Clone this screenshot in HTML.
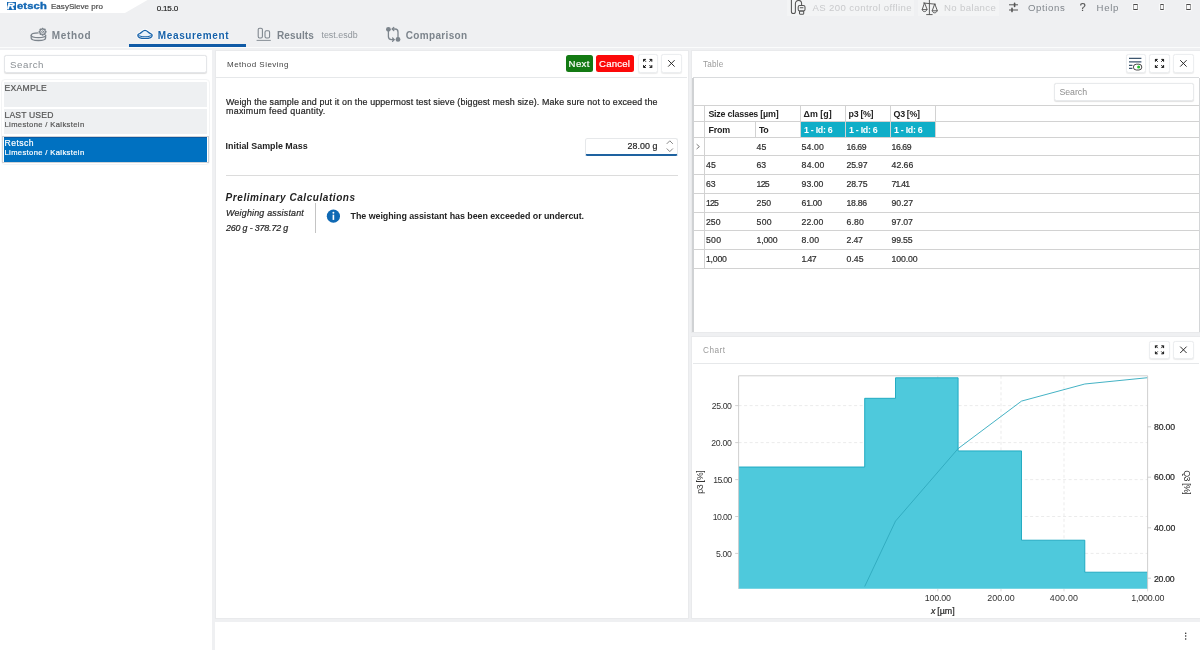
<!DOCTYPE html>
<html lang="en"><head><meta charset="utf-8"><title>EasySieve pro</title>
<style>
html,body{margin:0;padding:0}
body{width:1200px;height:650px;overflow:hidden;background:#eff0f2;position:relative;font-family:"Liberation Sans",sans-serif}
.abs{position:absolute}
.t{position:absolute;white-space:pre;font-family:"Liberation Sans",sans-serif}
.panel{position:absolute;background:#fff;box-sizing:border-box;border:1px solid #e9eaec}
.hl{position:absolute;height:1px;background:#d4d4d4}
.vl{position:absolute;width:1px;background:#d4d4d4}
.btn{position:absolute;box-sizing:border-box;background:#fff;border:1px solid #eceef0;border-radius:2.5px;box-shadow:0 0.5px 1px rgba(0,0,0,.08)}
.li{position:absolute;left:4.2px;width:203px;background:#eef0f2}
</style></head><body>
<!-- title tab -->
<svg class="abs" style="left:0;top:0" width="160" height="14" viewBox="0 0 160 14"><polygon points="0,0 147.5,0 125,13 0,13" fill="#fff"/></svg>
<!-- Retsch logo -->
<div class="abs" style="left:6.6px;top:2px;width:9.7px;height:7.6px;background:#1468b4"></div>
<!-- top right buttons bg -->
<div class="abs" style="left:787px;top:0;width:127px;height:16px;background:#f3f4f5"></div>
<div class="abs" style="left:917.6px;top:0;width:81.4px;height:16px;background:#f3f4f5"></div>
<!-- window glyph boxes -->
<div class="abs" style="left:1133.3px;top:4.1px;width:4.7px;height:5.9px;box-sizing:border-box;border:0.8px solid #a0a0a0;border-top:1.1px solid #484848;border-bottom:1.1px solid #484848;border-radius:0.8px;background:#f7f7f8;box-shadow:0 0 1.2px 1px rgba(255,255,255,.75)"></div>
<div class="abs" style="left:1159.7px;top:4.1px;width:4.7px;height:5.9px;box-sizing:border-box;border:0.8px solid #a0a0a0;border-top:1.1px solid #484848;border-bottom:1.1px solid #484848;border-radius:0.8px;background:#f7f7f8;box-shadow:0 0 1.2px 1px rgba(255,255,255,.75)"></div>
<div class="abs" style="left:1186px;top:4.1px;width:4.7px;height:5.9px;box-sizing:border-box;border:0.8px solid #a0a0a0;border-top:1.1px solid #484848;border-bottom:1.1px solid #484848;border-radius:0.8px;background:#f7f7f8;box-shadow:0 0 1.2px 1px rgba(255,255,255,.75)"></div>
<!-- tab underline + divider -->
<div class="abs" style="left:128.6px;top:44.3px;width:117.8px;height:2.6px;background:#0f5aa6"></div>
<div class="abs" style="left:0;top:46.9px;width:1200px;height:1.3px;background:#fbfcfc"></div>

<!-- left panel -->
<div class="abs" style="left:0;top:49.9px;width:211.8px;height:601px;background:#fff"></div>
<div class="abs" style="left:4.4px;top:55.2px;width:202.6px;height:18.2px;box-sizing:border-box;border:1px solid #e4e6e9;border-radius:2.5px;background:#fff;box-shadow:0 0.8px 1px rgba(0,0,0,.13)"></div>
<div class="abs" style="left:0.6px;top:78.6px;width:209.6px;height:86px;box-sizing:border-box;border:1px solid #f3f4f5;border-radius:4px"></div>
<div class="li" style="top:82px;height:24.5px"></div>
<div class="li" style="top:109.4px;height:24.2px"></div>
<div class="abs" style="left:1.8px;top:135.6px;width:207px;height:27px;box-sizing:border-box;border:1px solid #cfd2d6;background:#fff"></div>
<div class="li" style="top:136.8px;height:24.9px;background:#0071c1;box-sizing:border-box;border-top:1px solid #0a5aa4"></div>

<!-- middle panel -->
<div class="panel" style="left:214.9px;top:49.9px;width:473.7px;height:569.5px"></div>
<div class="abs" style="left:216.4px;top:76.6px;width:470.8px;height:1.2px;background:#e6e8ea"></div>
<div class="abs" style="left:565.6px;top:55px;width:27px;height:17.4px;background:#137a13;border-radius:2.5px"></div>
<div class="abs" style="left:596.2px;top:55px;width:37.8px;height:17.4px;background:#fc0909;border-radius:2.5px"></div>
<div class="btn" style="left:637.6px;top:54.2px;width:20.2px;height:18.4px"></div>
<div class="btn" style="left:661.2px;top:54.2px;width:20.4px;height:18.4px"></div>
<!-- input -->
<div class="abs" style="left:584.6px;top:137.6px;width:93.6px;height:18.6px;box-sizing:border-box;border:1px solid #e6e8ea;border-bottom:2px solid #1e62a0;border-radius:2.5px;background:#fff"></div>
<div class="abs" style="left:226px;top:175px;width:452px;height:1.3px;background:#dcdcdc"></div>
<div class="abs" style="left:315px;top:203px;width:1px;height:30px;background:#c4c4c4"></div>

<!-- table panel -->
<div class="panel" style="left:691.2px;top:49.9px;width:510px;height:283px"></div>
<div class="abs" style="left:692.6px;top:76.6px;width:506.4px;height:1.2px;background:#d9dbdd"></div>
<div class="btn" style="left:1125.6px;top:54.2px;width:20.2px;height:18.4px"></div>
<div class="btn" style="left:1149.4px;top:54.2px;width:20.2px;height:18.4px"></div>
<div class="btn" style="left:1173.2px;top:54.2px;width:20.4px;height:18.4px"></div>
<!-- grid -->
<div class="abs" style="left:692.2px;top:77.6px;width:1.4px;height:254.6px;background:#d0d2d4"></div>
<div class="abs" style="left:1054.2px;top:82.8px;width:140.2px;height:17.8px;box-sizing:border-box;border:1px solid #e8eaec;border-radius:2.5px;background:#fff;box-shadow:0 0.8px 1px rgba(0,0,0,.12)"></div>
<div class="abs" style="left:693.6px;top:105.2px;width:505.4px;height:1px;background:#d2d2d2"></div>
<div class="abs" style="left:693.6px;top:121.0px;width:505.4px;height:1px;background:#d2d2d2"></div>
<div class="abs" style="left:693.6px;top:136.6px;width:505.4px;height:1px;background:#d2d2d2"></div>
<div class="abs" style="left:693.6px;top:155.27px;width:505.4px;height:1px;background:#d2d2d2"></div>
<div class="abs" style="left:693.6px;top:174.04px;width:505.4px;height:1px;background:#d2d2d2"></div>
<div class="abs" style="left:693.6px;top:192.81px;width:505.4px;height:1px;background:#d2d2d2"></div>
<div class="abs" style="left:693.6px;top:211.58px;width:505.4px;height:1px;background:#d2d2d2"></div>
<div class="abs" style="left:693.6px;top:230.35px;width:505.4px;height:1px;background:#d2d2d2"></div>
<div class="abs" style="left:693.6px;top:249.12px;width:505.4px;height:1px;background:#d2d2d2"></div>
<div class="abs" style="left:693.6px;top:267.89px;width:505.4px;height:1px;background:#d2d2d2"></div>
<div class="abs" style="left:703.8px;top:105.2px;width:1px;height:163.4px;background:#d2d2d2"></div>
<div class="abs" style="left:1198.9px;top:77.6px;width:1px;height:254.6px;background:#d4d6d8"></div>
<div class="abs" style="left:755.0px;top:121.5px;width:1px;height:15.4px;background:#d2d2d2"></div>
<div class="abs" style="left:800.0px;top:105.6px;width:1px;height:31.2px;background:#d2d2d2"></div>
<div class="abs" style="left:845.0px;top:105.6px;width:1px;height:31.2px;background:#d2d2d2"></div>
<div class="abs" style="left:890.0px;top:105.6px;width:1px;height:31.2px;background:#d2d2d2"></div>
<div class="abs" style="left:935.2px;top:105.6px;width:1px;height:31.2px;background:#d2d2d2"></div>
<div class="abs" style="left:800.9px;top:121.9px;width:44.1px;height:14.8px;background:#10aec8"></div>
<div class="abs" style="left:845.9px;top:121.9px;width:44.1px;height:14.8px;background:#10aec8"></div>
<div class="abs" style="left:890.9px;top:121.9px;width:44.3px;height:14.8px;background:#10aec8"></div>

<!-- chart panel -->
<div class="panel" style="left:691.2px;top:336px;width:510px;height:283.4px"></div>
<div class="abs" style="left:692.6px;top:362.6px;width:506.4px;height:1.2px;background:#e6e8ea"></div>
<div class="btn" style="left:1149.4px;top:340.6px;width:20.2px;height:18.4px"></div>
<div class="btn" style="left:1173.2px;top:340.6px;width:20.4px;height:18.4px"></div>
<svg class="abs" style="left:0;top:0" width="1200" height="650" viewBox="0 0 1200 650">
<rect x="738.6" y="375.8" width="408.9999999999999" height="212.99999999999994" fill="#fff"/>
<line x1="738.6" y1="405.6" x2="1147.6" y2="405.6" stroke="#e6e6e6" stroke-width="0.8" stroke-dasharray="3 2.5"/><line x1="735.2" y1="405.6" x2="738.6" y2="405.6" stroke="#bdbdbd" stroke-width="0.7"/><line x1="738.6" y1="442.6" x2="1147.6" y2="442.6" stroke="#e6e6e6" stroke-width="0.8" stroke-dasharray="3 2.5"/><line x1="735.2" y1="442.6" x2="738.6" y2="442.6" stroke="#bdbdbd" stroke-width="0.7"/><line x1="738.6" y1="479.6" x2="1147.6" y2="479.6" stroke="#e6e6e6" stroke-width="0.8" stroke-dasharray="3 2.5"/><line x1="735.2" y1="479.6" x2="738.6" y2="479.6" stroke="#bdbdbd" stroke-width="0.7"/><line x1="738.6" y1="516.5" x2="1147.6" y2="516.5" stroke="#e6e6e6" stroke-width="0.8" stroke-dasharray="3 2.5"/><line x1="735.2" y1="516.5" x2="738.6" y2="516.5" stroke="#bdbdbd" stroke-width="0.7"/><line x1="738.6" y1="553.4" x2="1147.6" y2="553.4" stroke="#e6e6e6" stroke-width="0.8" stroke-dasharray="3 2.5"/><line x1="735.2" y1="553.4" x2="738.6" y2="553.4" stroke="#bdbdbd" stroke-width="0.7"/><line x1="937.8" y1="375.8" x2="937.8" y2="588.8" stroke="#e6e6e6" stroke-width="0.8" stroke-dasharray="3 2.5"/><line x1="937.8" y1="588.8" x2="937.8" y2="591.4" stroke="#cfcfcf" stroke-width="0.7"/><line x1="1001" y1="375.8" x2="1001" y2="588.8" stroke="#e6e6e6" stroke-width="0.8" stroke-dasharray="3 2.5"/><line x1="1001" y1="588.8" x2="1001" y2="591.4" stroke="#cfcfcf" stroke-width="0.7"/><line x1="1064" y1="375.8" x2="1064" y2="588.8" stroke="#e6e6e6" stroke-width="0.8" stroke-dasharray="3 2.5"/><line x1="1064" y1="588.8" x2="1064" y2="591.4" stroke="#cfcfcf" stroke-width="0.7"/><line x1="1147.6" y1="588.8" x2="1147.6" y2="591.4" stroke="#cfcfcf" stroke-width="0.7"/><line x1="1147.6" y1="426.8" x2="1151.0" y2="426.8" stroke="#bdbdbd" stroke-width="0.7"/><line x1="1147.6" y1="477.2" x2="1151.0" y2="477.2" stroke="#bdbdbd" stroke-width="0.7"/><line x1="1147.6" y1="527.8" x2="1151.0" y2="527.8" stroke="#bdbdbd" stroke-width="0.7"/><line x1="1147.6" y1="578.2" x2="1151.0" y2="578.2" stroke="#bdbdbd" stroke-width="0.7"/>
<polygon points="738.6,588.8 738.6,467.0 864.7,467.0 864.7,398.3 895.5,398.3 895.5,377.8 958.1,377.8 958.1,450.9 1021.5,450.9 1021.5,540.2 1084.8,540.2 1084.8,572.2 1147.6,572.2 1147.6,588.8" fill="#4ec9dc"/>
<polyline points="738.6,467.0 864.7,467.0 864.7,398.3 895.5,398.3 895.5,377.8 958.1,377.8 958.1,450.9 1021.5,450.9 1021.5,540.2 1084.8,540.2 1084.8,572.2 1147.6,572.2" fill="none" stroke="#16a5bd" stroke-width="0.9"/>
<polyline points="864.7,586.5 895.5,521.1 958.1,448.6 1021.5,401.1 1084.8,384.0 1147.6,377.7" fill="none" stroke="#2fa9bd" stroke-width="0.9"/>
<path d="M738.6 588.8V375.8H1147.6V588.8" fill="none" stroke="#c9c9c9" stroke-width="0.9"/>
</svg>

<!-- bottom bar -->
<div class="abs" style="left:215.4px;top:622px;width:984.6px;height:28px;background:#fff"></div>

<!-- icons -->
<svg class="abs" style="left:0;top:0" width="1200" height="650" viewBox="0 0 1200 650"><g fill="none" stroke="#7c848c" stroke-width="1.3" stroke-linecap="round" stroke-linejoin="round">
<ellipse cx="38.4" cy="35.3" rx="7.2" ry="2.4"/>
<path d="M31.2 35.3V38C31.2 39.5 34.4 40.5 38.4 40.5S45.6 39.5 45.6 38V35.3"/>
<circle cx="42.6" cy="31.7" r="4.3" fill="#eff0f2" stroke="none"/>
<path d="M45.24 31.15L45.98 31.33L45.98 32.07L45.24 32.25L44.86 33.18L45.25 33.83L44.73 34.35L44.08 33.96L43.15 34.34L42.97 35.08L42.23 35.08L42.05 34.34L41.12 33.96L40.47 34.35L39.95 33.83L40.34 33.18L39.96 32.25L39.22 32.07L39.22 31.33L39.96 31.15L40.34 30.22L39.95 29.57L40.47 29.05L41.12 29.44L42.05 29.06L42.23 28.32L42.97 28.32L43.15 29.06L44.08 29.44L44.73 29.05L45.25 29.57L44.86 30.22Z" stroke-width="1.25"/>
<circle cx="42.6" cy="31.7" r="1.0" stroke-width="0.9"/>
</g>
<path d="M137.8 35.2C137.8 34 139 33.9 139.9 33.4C141.9 32.3 143 30.3 145 30.3S148.1 32.3 150.1 33.4C151 33.9 152.2 34 152.2 35.2C152.2 37.2 149 38.5 145 38.5S137.8 37.2 137.8 35.2Z" fill="none" stroke="#fff" stroke-width="3" stroke-linejoin="round" opacity="0.9"/>
<g fill="none" stroke="#1560a8" stroke-width="1.2" stroke-linecap="round" stroke-linejoin="round">
<path d="M137.8 35.2C137.8 34 139 33.9 139.9 33.4C141.9 32.3 143 30.3 145 30.3S148.1 32.3 150.1 33.4C151 33.9 152.2 34 152.2 35.2C152.2 37.2 149 38.5 145 38.5S137.8 37.2 137.8 35.2Z" fill="#eaf2fa"/>
<path d="M138.4 35.1C139.6 36.3 142 36.8 145 36.8S150.4 36.3 151.6 35.1" stroke-width="1.0"/>
</g>
<g fill="none" stroke="#7c848c" stroke-width="1.05">
<rect x="258.2" y="28.2" width="4.2" height="9.8" rx="1.4"/>
<rect x="265" y="30.8" width="4.6" height="7.2" rx="1.4"/>
<path d="M256.6 40.4H270.8" stroke-width="0.9"/>
</g>
<g fill="none" stroke="#7c848c" stroke-width="1.3" stroke-linecap="round" stroke-linejoin="round">
<circle cx="388.4" cy="29.3" r="2.4" fill="#7c848c" stroke="none"/>
<circle cx="398" cy="39.4" r="2.4" fill="#7c848c" stroke="none"/>
<path d="M388.4 31V36.6C388.4 38.6 389.6 39.6 391.4 39.6H394"/>
<path d="M392.6 38L394.2 39.6L392.6 41.2"/>
<path d="M398 37.6V32C398 30 396.8 29 395 29H392.4"/>
<path d="M393.8 27.4L392.2 29L393.8 30.6"/>
</g>
<g fill="none" stroke="#555" stroke-width="1.05" stroke-linecap="round" stroke-linejoin="round">
<path d="M791.4 0V11.4C791.4 12.7 792.2 13.5 793.4 13.5S795.4 12.7 795.4 11.4V3.6C795.4 1.6 796.8 0.5 798.6 0.5S801.6 1.8 801.6 3.6V5.4"/>
<rect x="798.2" y="5.4" width="6.8" height="5.6" rx="1.6"/>
<rect x="799.5" y="11" width="4.2" height="3.2" rx="0.6"/>
<path d="M800.2 7.8H803"/>
</g>
<g fill="none" stroke="#555" stroke-width="0.95" stroke-linecap="round" stroke-linejoin="round">
<path d="M929.4 0V14.4M926.6 14.6H932.2M923.6 3L935.4 4.2"/>
<path d="M924.4 3.2L922.2 9.6H926.8Z"/><path d="M922.2 9.6C922.4 11 923.4 11.6 924.5 11.6S926.6 11 926.8 9.6"/>
<path d="M934.6 4.2L932.2 10.8H937Z"/><path d="M932.2 10.8C932.4 12.2 933.4 12.8 934.6 12.8S936.8 12.2 937 10.8"/>
</g>
<g fill="none" stroke="#555" stroke-width="1.0" stroke-linecap="round">
<path d="M1009.4 4.8H1017.6M1009.4 10H1017.6"/>
<path d="M1014.6 3.2V6.4M1012 8.4V11.6" stroke-width="1.6"/>
</g>
<path d="M645.90 61.70L643.60 59.40M645.90 59.40H643.60V61.70" fill="none" stroke="#111" stroke-width="1.0"/><path d="M649.50 61.70L651.80 59.40M649.50 59.40H651.80V61.70" fill="none" stroke="#111" stroke-width="1.0"/><path d="M645.90 65.10L643.60 67.40M645.90 67.40H643.60V65.10" fill="none" stroke="#111" stroke-width="1.0"/><path d="M649.50 65.10L651.80 67.40M649.50 67.40H651.80V65.10" fill="none" stroke="#111" stroke-width="1.0"/>
<path d="M668.20 60.20L674.60 66.60M674.60 60.20L668.20 66.60" stroke="#222" stroke-width="0.95" fill="none"/>
<path d="M1157.70 61.70L1155.40 59.40M1157.70 59.40H1155.40V61.70" fill="none" stroke="#111" stroke-width="1.0"/><path d="M1161.30 61.70L1163.60 59.40M1161.30 59.40H1163.60V61.70" fill="none" stroke="#111" stroke-width="1.0"/><path d="M1157.70 65.10L1155.40 67.40M1157.70 67.40H1155.40V65.10" fill="none" stroke="#111" stroke-width="1.0"/><path d="M1161.30 65.10L1163.60 67.40M1161.30 67.40H1163.60V65.10" fill="none" stroke="#111" stroke-width="1.0"/>
<path d="M1180.20 60.20L1186.60 66.60M1186.60 60.20L1180.20 66.60" stroke="#222" stroke-width="0.95" fill="none"/>
<path d="M1157.70 348.10L1155.40 345.80M1157.70 345.80H1155.40V348.10" fill="none" stroke="#111" stroke-width="1.0"/><path d="M1161.30 348.10L1163.60 345.80M1161.30 345.80H1163.60V348.10" fill="none" stroke="#111" stroke-width="1.0"/><path d="M1157.70 351.50L1155.40 353.80M1157.70 353.80H1155.40V351.50" fill="none" stroke="#111" stroke-width="1.0"/><path d="M1161.30 351.50L1163.60 353.80M1161.30 353.80H1163.60V351.50" fill="none" stroke="#111" stroke-width="1.0"/>
<path d="M1180.20 346.60L1186.60 353.00M1186.60 346.60L1180.20 353.00" stroke="#222" stroke-width="0.95" fill="none"/>
<g fill="none" stroke="#3d566e" stroke-width="1.3">
<path d="M1129 58.3H1141.4M1129 61.9H1141.4M1129 65.3H1132.4M1129 68.4H1132.4"/>
<rect x="1133.4" y="64.2" width="8.4" height="5.8" rx="2.9" fill="#fff" stroke="#333" stroke-width="0.9"/>
<circle cx="1138.6" cy="67.1" r="1.5" fill="#22c02a" stroke="none"/>
</g>
<g fill="none" stroke="#666" stroke-width="0.8" stroke-linecap="round" stroke-linejoin="round">
<path d="M667 143.6L669.8 140.8L672.6 143.6"/><path d="M667 148.8L669.8 151.6L672.6 148.8"/></g>
<circle cx="333.4" cy="216.2" r="6.6" fill="#0f69b4"/>
<circle cx="333.4" cy="212.8" r="0.95" fill="#fff"/><rect x="332.6" y="214.7" width="1.6" height="5.2" fill="#fff"/>
<path d="M696.6 144.2L699.4 146.6L696.6 149" fill="none" stroke="#444" stroke-width="0.7"/>
<circle cx="1185.7" cy="633.2" r="0.75" fill="#222"/><circle cx="1185.7" cy="636.1" r="0.75" fill="#222"/><circle cx="1185.7" cy="639" r="0.75" fill="#222"/></svg>

<!-- text -->
<div class="abs" style="left:0;top:0;width:1200px;height:650px;will-change:transform">
<span class="t" style="left:7.4px;top:0.8px;font-size:8.2px;line-height:11px;font-weight:700;font-style:italic;color:#fff;-webkit-text-stroke:0.3px #fff;transform:scaleX(1.3);transform-origin:0 0">R</span>
<span class="t" style="left:16.7px;top:0.6px;font-size:8.6px;line-height:11px;font-weight:700;color:#1468b4;-webkit-text-stroke:0.35px #1468b4;letter-spacing:0.1px;transform:scaleX(1.3);transform-origin:0 0">etsch</span>
<span class="t" style="font-size:8px;line-height:11.2px;color:#4a4a4a;letter-spacing:0.031px;-webkit-text-stroke:0.2px currentColor;left:51.00px;top:1.00px;">EasySieve pro</span>
<span class="t" style="font-size:8.1px;line-height:11.34px;color:#262626;letter-spacing:-0.203px;-webkit-text-stroke:0.2px currentColor;left:156.70px;top:3.00px;">0.15.0</span>
<span class="t" style="font-size:9.6px;line-height:13.44px;color:#c9cacc;letter-spacing:0.389px;left:812.40px;top:1.00px;">AS 200 control offline</span>
<span class="t" style="font-size:9.6px;line-height:13.44px;color:#c9cacc;letter-spacing:0.365px;left:944.00px;top:1.00px;">No balance</span>
<span class="t" style="font-size:9.6px;line-height:13.44px;color:#80868c;letter-spacing:0.617px;left:1028.00px;top:1.00px;">Options</span>
<span class="t" style="font-size:10.6px;line-height:14.84px;color:#555;letter-spacing:-0.106px;-webkit-text-stroke:0.2px currentColor;left:1079.80px;top:0.00px;">?</span>
<span class="t" style="font-size:9.6px;line-height:13.44px;color:#80868c;letter-spacing:0.666px;left:1096.60px;top:1.00px;">Help</span>
<span class="t" style="font-size:10px;line-height:14.0px;color:#7c848c;letter-spacing:0.676px;font-weight:700;left:51.70px;top:29.00px;">Method</span>
<span class="t" style="font-size:10px;line-height:14.0px;color:#1560a8;letter-spacing:0.630px;font-weight:700;text-shadow:0 0 1px #fff,0 0 1.6px #fff,0 0 1.6px #fff;left:157.80px;top:29.00px;">Measurement</span>
<span class="t" style="font-size:10px;line-height:14.0px;color:#7c848c;letter-spacing:0.139px;font-weight:700;left:276.90px;top:29.00px;">Results</span>
<span class="t" style="font-size:8.9px;line-height:12.46px;color:#8f959b;letter-spacing:0.041px;left:321.40px;top:29.00px;">test.esdb</span>
<span class="t" style="font-size:10px;line-height:14.0px;color:#7c848c;letter-spacing:0.346px;font-weight:700;left:405.70px;top:29.00px;">Comparison</span>
<span class="t" style="font-size:9.7px;line-height:13.58px;color:#8a8f94;letter-spacing:0.549px;left:10.00px;top:58.00px;">Search</span>
<span class="t" style="font-size:8.6px;line-height:12.04px;color:#555;letter-spacing:0.284px;-webkit-text-stroke:0.2px currentColor;left:4.50px;top:82.00px;">EXAMPLE</span>
<span class="t" style="font-size:8.6px;line-height:12.04px;color:#555;letter-spacing:0.155px;-webkit-text-stroke:0.2px currentColor;left:4.50px;top:109.00px;">LAST USED</span>
<span class="t" style="font-size:7.6px;line-height:10.64px;color:#555;letter-spacing:0.372px;-webkit-text-stroke:0.2px currentColor;left:4.50px;top:120.00px;">Limestone / Kalkstein</span>
<span class="t" style="font-size:8.6px;line-height:12.04px;color:#fff;letter-spacing:0.458px;-webkit-text-stroke:0.2px currentColor;left:4.50px;top:137.00px;">Retsch</span>
<span class="t" style="font-size:7.6px;line-height:10.64px;color:#fff;letter-spacing:0.372px;-webkit-text-stroke:0.2px currentColor;left:4.50px;top:148.00px;">Limestone / Kalkstein</span>
<span class="t" style="font-size:8px;line-height:11.2px;color:#444;letter-spacing:0.489px;left:227.00px;top:59.00px;">Method Sieving</span>
<span class="t" style="font-size:9.6px;line-height:13.44px;color:#fff;letter-spacing:0.366px;-webkit-text-stroke:0.2px currentColor;left:568.60px;top:57.00px;">Next</span>
<span class="t" style="font-size:9.6px;line-height:13.44px;color:#fff;letter-spacing:0.221px;-webkit-text-stroke:0.2px currentColor;left:599.00px;top:57.00px;">Cancel</span>
<span class="t" style="font-size:8.9px;line-height:12.46px;color:#262626;letter-spacing:0.134px;-webkit-text-stroke:0.2px currentColor;left:226.00px;top:96.00px;">Weigh the sample and put it on the uppermost test sieve (biggest mesh size). Make sure not to exceed the</span>
<span class="t" style="font-size:8.9px;line-height:12.46px;color:#262626;letter-spacing:0.274px;-webkit-text-stroke:0.2px currentColor;left:226.00px;top:105.00px;">maximum feed quantity.</span>
<span class="t" style="font-size:8.9px;line-height:12.46px;color:#222;letter-spacing:0.006px;font-weight:700;left:225.60px;top:140.00px;">Initial Sample Mass</span>
<span class="t" style="font-size:8.9px;line-height:12.46px;color:#262626;letter-spacing:0.054px;-webkit-text-stroke:0.2px currentColor;left:627.60px;top:140.00px;">28.00 g</span>
<span class="t" style="font-size:10px;line-height:14.0px;color:#222;letter-spacing:0.553px;font-weight:700;font-style:italic;left:225.60px;top:191.00px;">Preliminary Calculations</span>
<span class="t" style="font-size:8.9px;line-height:12.46px;color:#262626;letter-spacing:0.204px;-webkit-text-stroke:0.2px currentColor;font-style:italic;left:226.00px;top:207.00px;">Weighing assistant</span>
<span class="t" style="font-size:8.9px;line-height:12.46px;color:#262626;letter-spacing:-0.166px;-webkit-text-stroke:0.2px currentColor;font-style:italic;left:226.00px;top:222.00px;">260 g - 378.72 g</span>
<span class="t" style="font-size:8.9px;line-height:12.46px;color:#222;letter-spacing:-0.044px;font-weight:700;left:350.60px;top:210.00px;">The weighing assistant has been exceeded or undercut.</span>
<span class="t" style="font-size:8.2px;line-height:11.48px;color:#9a9a9a;letter-spacing:0.184px;left:703.00px;top:59.00px;">Table</span>
<span class="t" style="font-size:8.8px;line-height:12.32px;color:#8e8e8e;letter-spacing:-0.046px;left:1059.40px;top:86.00px;">Search</span>
<span class="t" style="font-size:8.9px;line-height:12.46px;color:#222;letter-spacing:-0.217px;font-weight:700;left:708.40px;top:108.00px;">Size classes [µm]</span>
<span class="t" style="font-size:8.9px;line-height:12.46px;color:#222;letter-spacing:-0.013px;font-weight:700;left:803.60px;top:108.00px;">Δm [g]</span>
<span class="t" style="font-size:8.9px;line-height:12.46px;color:#222;letter-spacing:-0.337px;font-weight:700;left:848.60px;top:108.00px;">p3 [%]</span>
<span class="t" style="font-size:8.9px;line-height:12.46px;color:#222;letter-spacing:-0.352px;font-weight:700;left:893.60px;top:108.00px;">Q3 [%]</span>
<span class="t" style="font-size:8.9px;line-height:12.46px;color:#222;letter-spacing:-0.197px;font-weight:700;left:708.60px;top:124.00px;">From</span>
<span class="t" style="font-size:8.9px;line-height:12.46px;color:#222;letter-spacing:-0.394px;font-weight:700;left:759.00px;top:124.00px;">To</span>
<span class="t" style="font-size:8.9px;line-height:12.46px;color:#fff;letter-spacing:-0.298px;font-weight:700;left:804.00px;top:124.00px;">1 - Id: 6</span>
<span class="t" style="font-size:8.9px;line-height:12.46px;color:#fff;letter-spacing:-0.298px;font-weight:700;left:849.00px;top:124.00px;">1 - Id: 6</span>
<span class="t" style="font-size:8.9px;line-height:12.46px;color:#fff;letter-spacing:-0.298px;font-weight:700;left:894.00px;top:124.00px;">1 - Id: 6</span>
<span class="t" style="font-size:8.7px;line-height:12.18px;color:#2e2e2e;letter-spacing:0.141px;-webkit-text-stroke:0.2px currentColor;left:756.60px;top:141.00px;">45</span>
<span class="t" style="font-size:8.7px;line-height:12.18px;color:#2e2e2e;letter-spacing:0.150px;-webkit-text-stroke:0.2px currentColor;left:801.60px;top:141.00px;">54.00</span>
<span class="t" style="font-size:8.7px;line-height:12.18px;color:#2e2e2e;letter-spacing:-0.434px;-webkit-text-stroke:0.2px currentColor;left:846.60px;top:141.00px;">16.69</span>
<span class="t" style="font-size:8.7px;line-height:12.18px;color:#2e2e2e;letter-spacing:-0.434px;-webkit-text-stroke:0.2px currentColor;left:891.60px;top:141.00px;">16.69</span>
<span class="t" style="font-size:8.7px;line-height:12.18px;color:#2e2e2e;letter-spacing:0.141px;-webkit-text-stroke:0.2px currentColor;left:706.00px;top:159.00px;">45</span>
<span class="t" style="font-size:8.7px;line-height:12.18px;color:#2e2e2e;letter-spacing:-0.078px;-webkit-text-stroke:0.2px currentColor;left:756.60px;top:159.00px;">63</span>
<span class="t" style="font-size:8.7px;line-height:12.18px;color:#2e2e2e;letter-spacing:0.263px;-webkit-text-stroke:0.2px currentColor;left:801.60px;top:159.00px;">84.00</span>
<span class="t" style="font-size:8.7px;line-height:12.18px;color:#2e2e2e;letter-spacing:-0.216px;-webkit-text-stroke:0.2px currentColor;left:846.60px;top:159.00px;">25.97</span>
<span class="t" style="font-size:8.7px;line-height:12.18px;color:#2e2e2e;letter-spacing:-0.025px;-webkit-text-stroke:0.2px currentColor;left:891.60px;top:159.00px;">42.66</span>
<span class="t" style="font-size:8.7px;line-height:12.18px;color:#2e2e2e;letter-spacing:-0.078px;-webkit-text-stroke:0.2px currentColor;left:706.00px;top:178.00px;">63</span>
<span class="t" style="font-size:8.7px;line-height:12.18px;color:#2e2e2e;letter-spacing:-0.781px;-webkit-text-stroke:0.2px currentColor;left:756.60px;top:178.00px;">125</span>
<span class="t" style="font-size:8.7px;line-height:12.18px;color:#2e2e2e;letter-spacing:0.016px;-webkit-text-stroke:0.2px currentColor;left:801.60px;top:178.00px;">93.00</span>
<span class="t" style="font-size:8.7px;line-height:12.18px;color:#2e2e2e;letter-spacing:-0.197px;-webkit-text-stroke:0.2px currentColor;left:846.60px;top:178.00px;">28.75</span>
<span class="t" style="font-size:8.7px;line-height:12.18px;color:#2e2e2e;letter-spacing:-0.812px;-webkit-text-stroke:0.2px currentColor;left:891.60px;top:178.00px;">71.41</span>
<span class="t" style="font-size:8.7px;line-height:12.18px;color:#2e2e2e;letter-spacing:-0.781px;-webkit-text-stroke:0.2px currentColor;left:706.00px;top:197.00px;">125</span>
<span class="t" style="font-size:8.7px;line-height:12.18px;color:#2e2e2e;letter-spacing:0.010px;-webkit-text-stroke:0.2px currentColor;left:756.60px;top:197.00px;">250</span>
<span class="t" style="font-size:8.7px;line-height:12.18px;color:#2e2e2e;letter-spacing:-0.291px;-webkit-text-stroke:0.2px currentColor;left:801.60px;top:197.00px;">61.00</span>
<span class="t" style="font-size:8.7px;line-height:12.18px;color:#2e2e2e;letter-spacing:-0.312px;-webkit-text-stroke:0.2px currentColor;left:846.60px;top:197.00px;">18.86</span>
<span class="t" style="font-size:8.7px;line-height:12.18px;color:#2e2e2e;letter-spacing:-0.059px;-webkit-text-stroke:0.2px currentColor;left:891.60px;top:197.00px;">90.27</span>
<span class="t" style="font-size:8.7px;line-height:12.18px;color:#2e2e2e;letter-spacing:0.010px;-webkit-text-stroke:0.2px currentColor;left:706.00px;top:216.00px;">250</span>
<span class="t" style="font-size:8.7px;line-height:12.18px;color:#2e2e2e;letter-spacing:0.255px;-webkit-text-stroke:0.2px currentColor;left:756.60px;top:216.00px;">500</span>
<span class="t" style="font-size:8.7px;line-height:12.18px;color:#2e2e2e;letter-spacing:-0.016px;-webkit-text-stroke:0.2px currentColor;left:801.60px;top:216.00px;">22.00</span>
<span class="t" style="font-size:8.7px;line-height:12.18px;color:#2e2e2e;letter-spacing:0.121px;-webkit-text-stroke:0.2px currentColor;left:846.60px;top:216.00px;">6.80</span>
<span class="t" style="font-size:8.7px;line-height:12.18px;color:#2e2e2e;letter-spacing:-0.141px;-webkit-text-stroke:0.2px currentColor;left:891.60px;top:216.00px;">97.07</span>
<span class="t" style="font-size:8.7px;line-height:12.18px;color:#2e2e2e;letter-spacing:0.255px;-webkit-text-stroke:0.2px currentColor;left:706.00px;top:234.00px;">500</span>
<span class="t" style="font-size:8.7px;line-height:12.18px;color:#2e2e2e;letter-spacing:-0.209px;-webkit-text-stroke:0.2px currentColor;left:756.60px;top:234.00px;">1,000</span>
<span class="t" style="font-size:8.7px;line-height:12.18px;color:#2e2e2e;letter-spacing:0.180px;-webkit-text-stroke:0.2px currentColor;left:801.60px;top:234.00px;">8.00</span>
<span class="t" style="font-size:8.7px;line-height:12.18px;color:#2e2e2e;letter-spacing:-0.184px;-webkit-text-stroke:0.2px currentColor;left:846.60px;top:234.00px;">2.47</span>
<span class="t" style="font-size:8.7px;line-height:12.18px;color:#2e2e2e;letter-spacing:-0.200px;-webkit-text-stroke:0.2px currentColor;left:891.60px;top:234.00px;">99.55</span>
<span class="t" style="font-size:8.7px;line-height:12.18px;color:#2e2e2e;letter-spacing:-0.209px;-webkit-text-stroke:0.2px currentColor;left:706.00px;top:253.00px;">1,000</span>
<span class="t" style="font-size:8.7px;line-height:12.18px;color:#2e2e2e;letter-spacing:-0.613px;-webkit-text-stroke:0.2px currentColor;left:801.60px;top:253.00px;">1.47</span>
<span class="t" style="font-size:8.7px;line-height:12.18px;color:#2e2e2e;letter-spacing:0.004px;-webkit-text-stroke:0.2px currentColor;left:846.60px;top:253.00px;">0.45</span>
<span class="t" style="font-size:8.7px;line-height:12.18px;color:#2e2e2e;letter-spacing:-0.107px;-webkit-text-stroke:0.2px currentColor;left:891.60px;top:253.00px;">100.00</span>
<span class="t" style="font-size:8.2px;line-height:11.48px;color:#9a9a9a;letter-spacing:0.514px;left:703.00px;top:345.00px;">Chart</span>
<span class="t" style="font-size:8.7px;line-height:12.18px;color:#333;letter-spacing:-0.377px;left:711.73px;top:400.00px;">25.00</span>
<span class="t" style="font-size:8.7px;line-height:12.18px;color:#333;letter-spacing:-0.259px;left:711.14px;top:437.00px;">20.00</span>
<span class="t" style="font-size:8.7px;line-height:12.18px;color:#333;letter-spacing:-0.679px;left:713.24px;top:474.00px;">15.00</span>
<span class="t" style="font-size:8.7px;line-height:12.18px;color:#333;letter-spacing:-0.558px;left:712.64px;top:511.00px;">10.00</span>
<span class="t" style="font-size:8.7px;line-height:12.18px;color:#333;letter-spacing:-0.320px;left:715.96px;top:548.00px;">5.00</span>
<span class="t" style="font-size:8.7px;line-height:12.18px;color:#262626;letter-spacing:-0.155px;-webkit-text-stroke:0.2px currentColor;left:1154.00px;top:421.00px;">80.00</span>
<span class="t" style="font-size:8.7px;line-height:12.18px;color:#262626;letter-spacing:-0.196px;-webkit-text-stroke:0.2px currentColor;left:1154.00px;top:471.00px;">60.00</span>
<span class="t" style="font-size:8.7px;line-height:12.18px;color:#262626;letter-spacing:-0.118px;-webkit-text-stroke:0.2px currentColor;left:1154.00px;top:522.00px;">40.00</span>
<span class="t" style="font-size:8.7px;line-height:12.18px;color:#262626;letter-spacing:-0.259px;-webkit-text-stroke:0.2px currentColor;left:1154.00px;top:573.00px;">20.00</span>
<span class="t" style="font-size:8.9px;line-height:12.46px;color:#333;letter-spacing:-0.203px;left:924.83px;top:592.00px;">100.00</span>
<span class="t" style="font-size:8.9px;line-height:12.46px;color:#333;letter-spacing:0.068px;left:987.22px;top:592.00px;">200.00</span>
<span class="t" style="font-size:8.9px;line-height:12.46px;color:#333;letter-spacing:0.195px;left:1049.84px;top:592.00px;">400.00</span>
<span class="t" style="font-size:8.9px;line-height:12.46px;color:#333;letter-spacing:-0.193px;left:1131.30px;top:592.00px;">1,000.00</span>
<span class="t" style="font-size:8.9px;line-height:12.46px;color:#262626;letter-spacing:0.037px;-webkit-text-stroke:0.2px currentColor;left:937.20px;top:605.00px;">[µm]</span>
<span class="t" style="font-size:8.9px;line-height:12.46px;color:#262626;letter-spacing:0.162px;-webkit-text-stroke:0.2px currentColor;font-style:italic;left:931.00px;top:605.00px;">x</span>
<span class="t" style="font-size:8.9px;line-height:12.46px;color:#333;letter-spacing:-0.362px;left:688.50px;top:476.27px;width:22.64px;transform:rotate(-90deg);transform-origin:11.50px 6.23px;">p3 [%]</span>
<span class="t" style="font-size:8.9px;line-height:12.46px;color:#333;letter-spacing:-0.523px;left:1174.70px;top:475.57px;width:23.48px;transform:rotate(90deg);transform-origin:12.00px 6.23px;">Q3 [%]</span>
</div>
</body></html>
